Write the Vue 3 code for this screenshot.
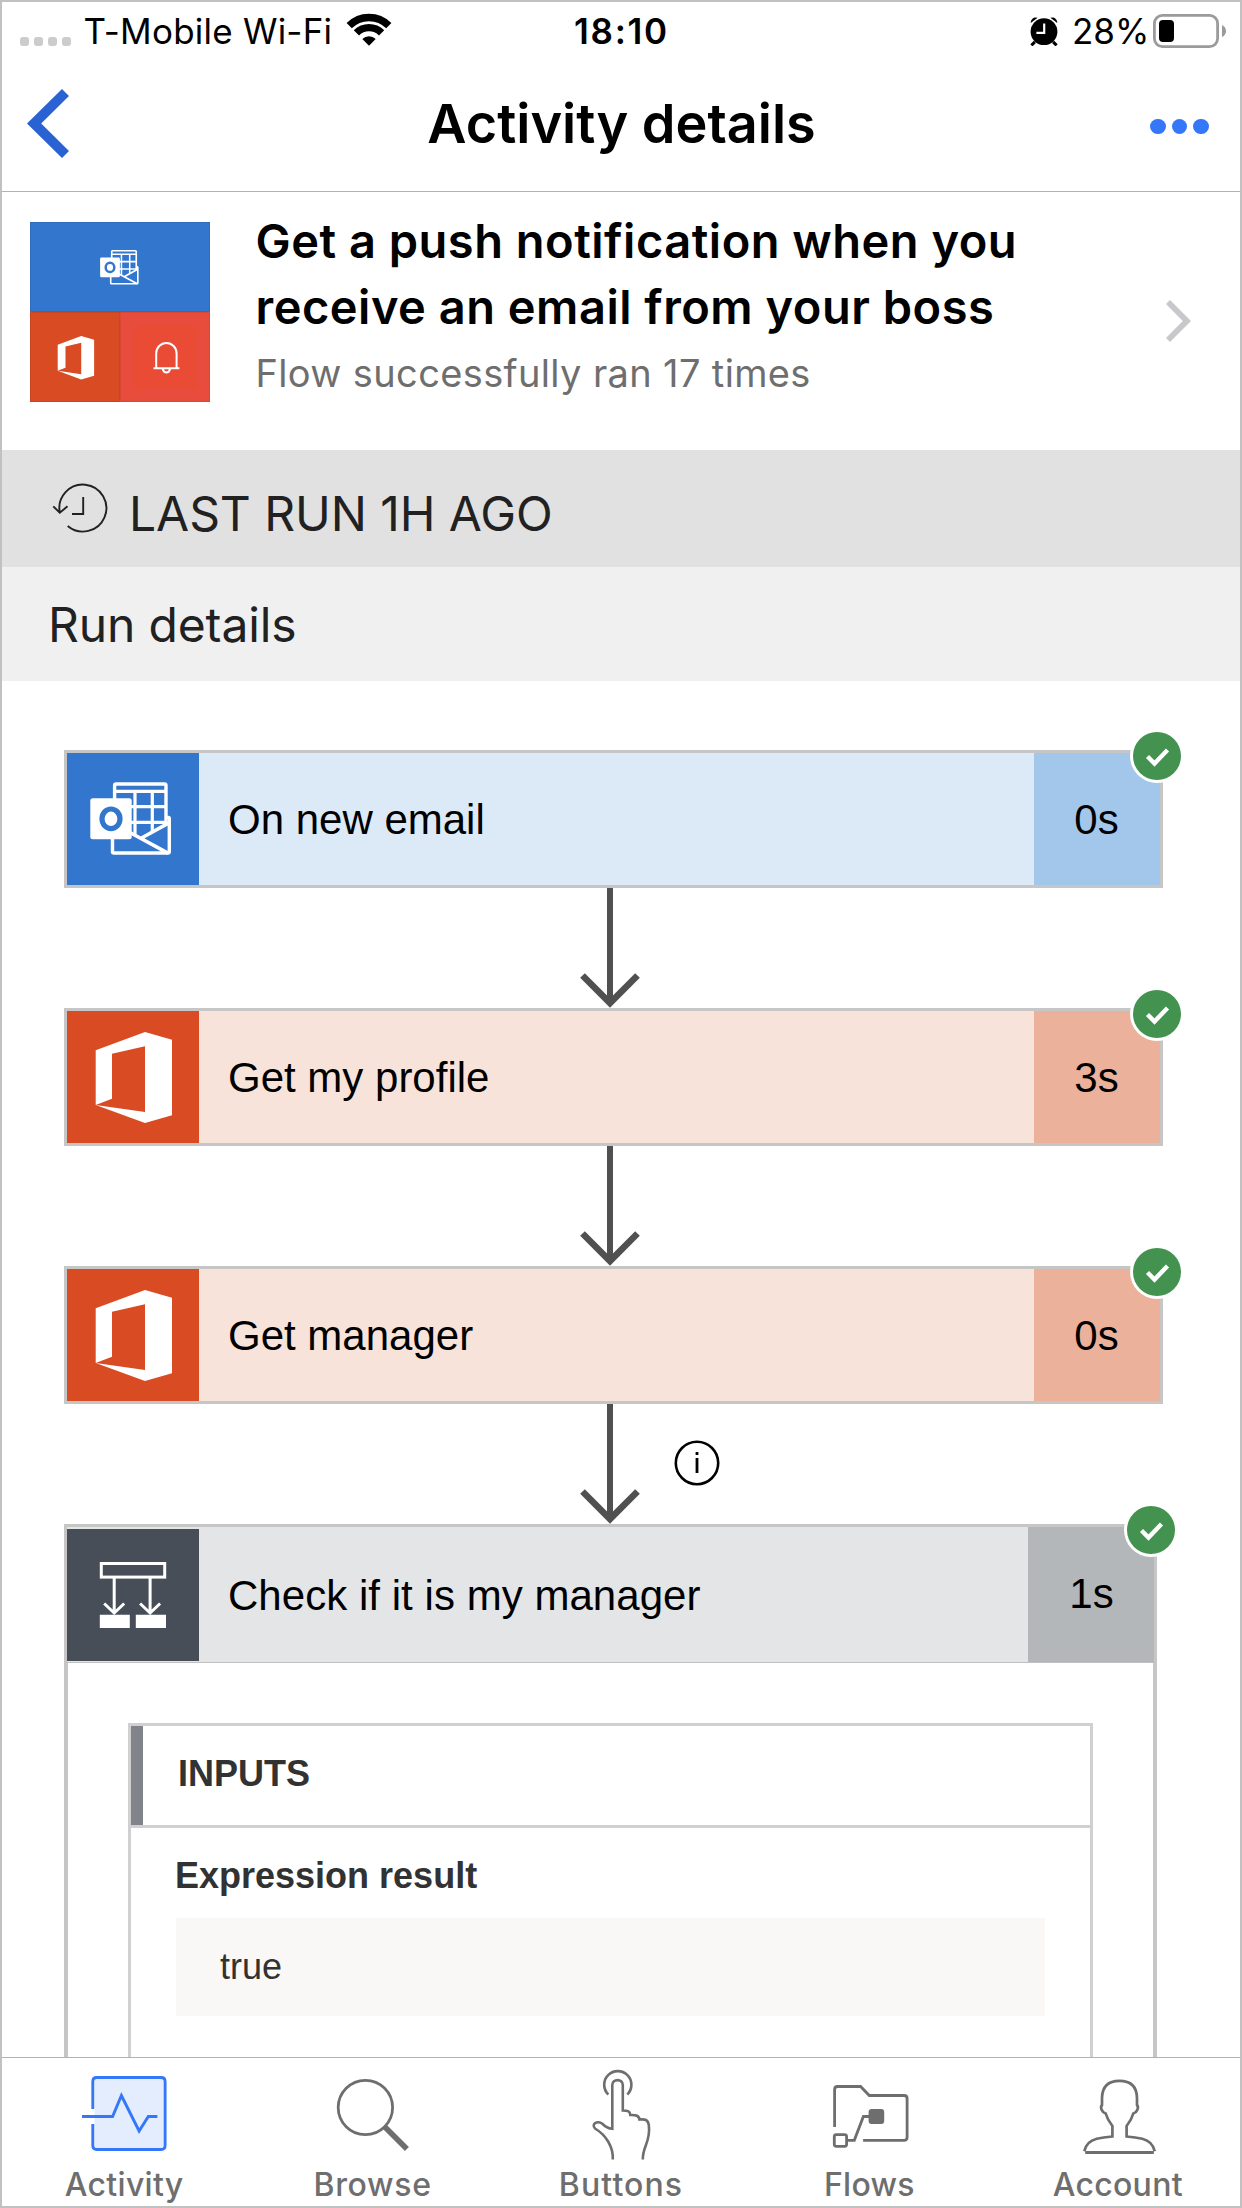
<script setup>
const steps = [
  { title: 'On new email', time: '0s', kind: 'outlook' },
  { title: 'Get my profile', time: '3s', kind: 'office' },
  { title: 'Get manager', time: '0s', kind: 'office', info: true }
]
</script>

<template>
  <div class="screen">
    <!-- reusable glyphs -->
    <svg class="defs" width="0" height="0" aria-hidden="true">
      <symbol id="g-outlook" viewBox="0 0 132 132">
        <rect x="47.6" y="31" width="51.4" height="66" rx="1.5" fill="none" stroke="#fff" stroke-width="3.4" />
        <path d="M48 38.3H99M60 53.7H99M60 69.3H99M68 38V92M85.3 38V92" stroke="#fff" stroke-width="3.2" fill="none" />
        <path d="M45 86V100.5H103V70L74.7 85L64 79Z" fill="#3376cd" />
        <path d="M99 64.5H101.5Q102.3 64.5 102.3 66V98.5Q102.3 100 100.8 100H47Q45.5 100 45.5 98.5V84" fill="none" stroke="#fff" stroke-width="3.4" />
        <path d="M62 79L101 100.2M74.5 85L102 69.8" stroke="#fff" stroke-width="3.6" fill="none" />
        <rect x="23.3" y="45.2" width="41.4" height="41" rx="2.5" fill="#fff" />
        <ellipse cx="44" cy="65.8" rx="9" ry="9.8" fill="none" stroke="#3376cd" stroke-width="5.2" />
      </symbol>
      <symbol id="g-office" viewBox="0 0 132 132">
        <path d="M28.7 94V39.3L78 21L105 28.7V104.3L78 112L28.7 94L78 101V35.3L45 42.7V87.7Z" fill="#fff" />
      </symbol>
      <symbol id="g-check" viewBox="0 0 54 54">
        <circle cx="27" cy="27" r="27" fill="#fff" />
        <circle cx="27" cy="27" r="24" fill="#43924f" />
        <path d="M17.5 27.5L24.5 34.5L37.5 21" fill="none" stroke="#fff" stroke-width="4.4" />
      </symbol>
    </svg>

    <div class="status">
      <div class="status-left">
        <div class="signal"><i></i><i></i><i></i><i></i></div>
        <span class="carrier">T-Mobile Wi-Fi</span>
        <svg class="wifi" width="46" height="34" viewBox="346 12 46 34">
          <path d="M349.2 25.7A28 28 0 0 1 388.8 25.7M356.4 32.9A17.8 17.8 0 0 1 381.6 32.9" fill="none" stroke="#000" stroke-width="7.4" />
          <path d="M369 45.7L362.3 39A9.5 9.5 0 0 1 375.7 39Z" />
        </svg>
      </div>
      <span class="clock">18:10</span>
      <div class="status-right">
        <svg width="28" height="30" viewBox="1029.6 15.6 28 30">
          <circle cx="1043.6" cy="31.3" r="13.4" />
          <path d="M1034.5 41.5L1031 45M1052.7 41.5L1056.2 45" stroke="#000" stroke-width="3" />
          <path d="M1030.4 22.5A5 5 0 0 1 1037.2 17.4ZM1056.8 22.5A5 5 0 0 0 1050 17.4Z" />
          <path d="M1043.8 23V32.4H1036" fill="none" stroke="#fff" stroke-width="2.2" />
        </svg>
        <span class="percent">28%</span>
        <svg width="74" height="34" viewBox="1153 13 74 34">
          <rect x="1154.4" y="14.4" width="63.2" height="31.2" rx="8" fill="none" stroke="#9b9b9b" stroke-width="2.8" />
          <rect x="1159" y="19" width="15" height="22" rx="4" />
          <path d="M1222 24Q1226 26 1226 30T1222 36Z" fill="#9b9b9b" />
        </svg>
      </div>
    </div>

    <header class="nav">
      <svg class="back" width="42" height="69" viewBox="0 0 42 69">
        <path d="M35 0L42 7L14.2 34.5L42 62L35 69L0 34.5Z" fill="#2a62d3" />
      </svg>
      <h1>Activity details</h1>
      <div class="more"><i></i><i></i><i></i></div>
    </header>

    <section class="flow-card">
      <div class="thumb">
        <div class="tile tile-blue"><svg width="63" height="63"><use href="#g-outlook" /></svg></div>
        <div class="tile tile-orange"><svg width="63" height="63"><use href="#g-office" /></svg></div>
        <div class="tile tile-red">
          <svg class="bell" width="63" height="63" viewBox="0 0 63 63">
            <path d="M22.2 41.5V27.5A10.2 10.6 0 0 1 42.6 27.5V41.5M19.5 42.2H45.4M28.8 43Q29.5 46.4 32.4 46.4T36 43" fill="none" stroke="#fff" stroke-width="2" />
          </svg>
        </div>
      </div>
      <div class="flow-text">
        <h2>Get a push notification when you<br>receive an email from your boss</h2>
        <p>Flow successfully ran 17 times</p>
      </div>
      <svg class="chevron" width="25" height="42" viewBox="0 0 25 42">
        <path d="M4 0L25 21L4 42L0 38L16.8 21L0 4Z" fill="#c7c7cc" />
      </svg>
    </section>

    <div class="last-run">
      <svg width="60" height="60" viewBox="50 480 60 60">
        <path d="M67.7 526A23.5 23.5 0 1 0 59.8 512.5M53.3 506.3L59.8 512.8L67.5 506.3M83.2 497V514H72" fill="none" stroke="#212121" stroke-width="1.9" />
      </svg>
      <span>LAST RUN 1H AGO</span>
    </div>
    <div class="run-details">Run details</div>

    <main class="flow">
      <template v-for="step in steps" :key="step.title">
        <div class="step" :class="step.kind">
          <div class="step-icon"><svg width="132" height="132"><use :href="'#g-' + step.kind" /></svg></div>
          <div class="step-title">{{ step.title }}</div>
          <div class="step-time">{{ step.time }}</div>
          <svg class="check" width="54" height="54"><use href="#g-check" /></svg>
        </div>
        <div class="connector">
          <svg width="60" height="120" viewBox="0 0 60 120">
            <path d="M30 0V114" stroke="#505050" stroke-width="6" />
            <path d="M2.5 87.5L30 115L57.5 87.5" fill="none" stroke="#505050" stroke-width="6.6" />
          </svg>
          <svg v-if="step.info" class="info" width="46" height="46" viewBox="0 0 46 46">
            <circle cx="23" cy="23" r="21.2" fill="none" stroke="#000" stroke-width="2.6" />
            <path d="M23 12V15M23 18V33" stroke="#000" stroke-width="2.8" />
          </svg>
        </div>
      </template>

      <div class="scope">
        <div class="scope-head">
          <div class="step-icon">
            <svg width="132" height="132" viewBox="0 0 132 132">
              <rect x="34.3" y="34.5" width="63.4" height="13.6" fill="none" stroke="#fff" stroke-width="3" />
              <path d="M47.2 49V83M83.1 49V83M37.2 74.5L47.2 84L57.2 74.5M73.1 74.5L83.1 84L93.1 74.5" fill="none" stroke="#fff" stroke-width="3" />
              <path d="M32.8 85.7H62.8V99H32.8ZM68.8 85.7H99V99H68.8Z" fill="#fff" />
            </svg>
          </div>
          <div class="step-title">Check if it is my manager</div>
          <div class="step-time">1s</div>
          <svg class="check" width="54" height="54"><use href="#g-check" /></svg>
        </div>
        <div class="scope-body">
          <div class="inputs">
            <div class="inputs-head"><span>INPUTS</span></div>
            <div class="inputs-label">Expression result</div>
            <div class="inputs-value">true</div>
          </div>
        </div>
      </div>
    </main>

    <nav class="tabs">
      <div class="tab">
        <svg width="100" height="104" viewBox="74.2 2062 100 104">
          <path d="M95 2079H163.5V2148H95V2124.5H93V2109H95Z" fill="#e4edfd" />
          <path d="M93 2109V2081.5Q93 2077.5 97 2077.5H161.3Q165.3 2077.5 165.3 2081.5V2145.5Q165.3 2149.5 161.3 2149.5H97Q93 2149.5 93 2145.5V2124" fill="none" stroke="#3478f9" stroke-width="2.9" />
          <rect x="90" y="2109" width="4.6" height="15" fill="#fff" />
          <path d="M82.2 2116.5H112.8L121.6 2095.5L139.3 2131L148.5 2116.5H157.6" fill="none" stroke="#3478f9" stroke-width="2.9" />
        </svg>
        <span>Activity</span>
      </div>
      <div class="tab tab-wide">
        <svg width="100" height="104" viewBox="322.6 2062 100 104">
          <circle cx="365" cy="2107.5" r="27.2" fill="none" stroke="#6e6e6e" stroke-width="2.8" />
          <path d="M384.5 2127L406.5 2149" stroke="#6e6e6e" stroke-width="5.6" />
        </svg>
        <span>Browse</span>
      </div>
      <div class="tab tab-wider">
        <svg width="100" height="104" viewBox="571 2062 100 104">
          <g fill="none" stroke="#6e6e6e" stroke-width="2.6">
            <path d="M608.3 2094.5A13.6 13.6 0 1 1 627.3 2094.5" />
            <path d="M612.8 2159.5C613.5 2147 606 2135 595 2128.5C591 2124 597 2120.5 602 2123.5C606 2127.500 608.5 2128.5 612.3 2128.8V2085C612.3 2078.5 622.8 2078.5 622.8 2085V2110.5C627 2110.5 630 2110.8 630.3 2115C635 2114.8 639 2115 639.5 2119.5C645 2119 648 2119.5 648.8 2125C651 2142 642.5 2146 642.8 2159.5" />
          </g>
        </svg>
        <span>Buttons</span>
      </div>
      <div class="tab">
        <svg width="100" height="104" viewBox="819.4 2062 100 104">
          <g fill="none" stroke="#6e6e6e" stroke-width="2.8">
            <path d="M835 2127V2089.5Q835 2086.5 838 2086.5H861L869.7 2095.5H904.5Q907.5 2095.5 907.5 2098.5V2137.3Q907.5 2140.3 904.5 2140.3H863.5" />
            <rect x="834.7" y="2134.7" width="12.3" height="11.6" rx="2" />
            <path d="M848 2140.3H854.7L863.8 2116.5H870" />
          </g>
          <rect x="869" y="2109" width="15.6" height="15" rx="3" fill="#6e6e6e" />
        </svg>
        <span>Flows</span>
      </div>
      <div class="tab">
        <svg width="100" height="104" viewBox="1067.8 2062 100 104">
          <path d="M1084.1 2151.2C1085.5 2144.5 1090 2140.5 1096.5 2138.8C1101 2137.8 1107 2137 1112.2 2136.5V2126C1109 2122 1107 2119 1105.5 2113.5C1102 2112.5 1099.5 2107.5 1101.8 2105V2098C1102 2086 1109 2080.8 1119.3 2080.8S1136.6 2086 1136.8 2098V2105C1139.1 2107.5 1136.6 2112.5 1133.1 2113.5C1131.6 2119 1129.6 2122 1126.4 2126V2136.5C1131.6 2137 1137.6 2137.8 1142.1 2138.8C1148.6 2140.5 1153.1 2144.5 1154.5 2151.2" fill="none" stroke="#6e6e6e" stroke-width="2.7" />
          <path d="M1085 2152.5H1153.6" stroke="#6e6e6e" stroke-width="3" />
        </svg>
        <span>Account</span>
      </div>
    </nav>
  </div>
</template>

<style>
body { background: #fff; }
</style>

<style scoped>
* { box-sizing: border-box; }
.screen {
  position: relative;
  width: 1242px;
  height: 2208px;
  display: flex;
  flex-direction: column;
  overflow: hidden;
  background: #fff;
  color: #000;
  font-family: Inter, "Liberation Sans", sans-serif;
}
.screen::after {
  content: "";
  position: absolute;
  inset: 0;
  border: 2px solid #c1c1c1;
  pointer-events: none;
}
.defs { position: absolute; }
svg { display: block; flex: none; }
h1, h2, p { margin: 0; }

.status {
  height: 62px;
  flex: none;
  display: grid;
  grid-template-columns: 1fr auto 1fr;
  align-items: center;
  padding: 0 15px 0 20px;
  font-size: 35px;
  line-height: 42px;
}
.status-left, .status-right { display: flex; align-items: center; }
.status-right { justify-content: flex-end; }
.signal { display: flex; gap: 5px; margin: 21px 12.5px 0 0; }
.signal i { width: 9px; height: 9px; border-radius: 3px; background: #ccc; }
.carrier { width: 262.5px; letter-spacing: 0.23px; white-space: nowrap; }
.wifi { margin-top: -4px; }
.clock { font-weight: 600; letter-spacing: 1.7px; padding-right: 4px; }
.percent { width: 81px; margin-left: 14px; }

.nav {
  height: 130px;
  flex: none;
  display: grid;
  grid-template-columns: 1fr auto 1fr;
  align-items: center;
  padding: 0 33px 6px 27px;
  border-bottom: 1px solid #b2b2b2;
}
.nav h1 { font-size: 54px; font-weight: 600; line-height: 66px; margin-left: 7px; }
.more { display: flex; gap: 6px; justify-self: end; margin-top: 6px; }
.more i { width: 15.6px; height: 15.6px; border-radius: 50%; background: #3478f9; }

.flow-card { height: 258px; flex: none; display: flex; padding: 16px 0 0 30px; }
.thumb {
  width: 180px;
  height: 180px;
  margin-top: 14px;
  display: grid;
  grid-template: 90px 90px / 90px 90px;
}
.tile { display: flex; align-items: center; justify-content: center; }
.tile-blue { grid-column: span 2; background: #3376cd; box-shadow: inset 0 0 0 1px #2f6cbd; }
.tile-orange { background: #d94b22; box-shadow: inset 0 0 0 1px #c9471f; }
.tile-red { background: #e84c3d; box-shadow: inset 0 0 0 1px #d94837; }
.bell { background: #ea4b35; }
.flow-text { width: 911px; padding-left: 45.5px; }
.flow-text h2 { font-size: 47px; font-weight: 600; line-height: 66px; letter-spacing: 0.5px; }
.flow-text p { font-size: 38px; line-height: 66px; letter-spacing: 0.36px; color: #6e6e6e; }
.chevron { margin: 92px 0 0 45px; }

.last-run {
  height: 117px;
  flex: none;
  display: flex;
  padding-left: 50px;
  background: #e1e1e1;
  color: #212121;
  font-size: 48px;
  line-height: 128px;
  letter-spacing: -0.06px;
}
.last-run svg { margin: 30px 19px 0 0; }
.run-details {
  height: 114px;
  flex: none;
  padding-left: 48px;
  background: #f0f0f0;
  color: #212121;
  font-size: 48px;
  line-height: 115px;
  letter-spacing: -0.15px;
}

.flow {
  height: 1376px;
  flex: none;
  overflow: hidden;
  padding: 69px 0 0 64px;
  font-family: "Liberation Sans", Arial, sans-serif;
}
.step {
  position: relative;
  width: 1099px;
  height: 138px;
  display: flex;
  border: 3px solid #c6c6c6;
  font-size: 42px;
  line-height: 134px;
}
.step-icon { width: 132px; height: 132px; }
.step-title { flex: 1; height: 100%; padding-left: 29px; }
.step-time { width: 126px; height: 100%; padding-right: 1px; text-align: center; }
.outlook .step-icon { background: #3376cd; }
.outlook .step-title { background: #dce9f7; }
.outlook .step-time { background: #a3c6eb; }
.office .step-icon { background: #d94b22; }
.office .step-title { background: #f7e3da; }
.office .step-time { background: #ebb19b; }
.check { position: absolute; top: -24px; right: -24px; }
.connector { height: 120px; display: flex; padding-left: 516px; }
.info { margin: 35.5px 0 0 34px; }

.scope { width: 1093px; }
.scope-head {
  position: relative;
  height: 139px;
  display: flex;
  border: 3px solid #c6c6c6;
  border-bottom: 1px solid #c0c0c3;
  background: #e4e5e7;
  font-size: 42px;
  line-height: 137px;
}
.scope-head .step-icon { margin-top: 2px; background: #484e58; }
.scope-head .step-title { letter-spacing: 0.04px; }
.scope-head .step-time { padding: 0 0 0 1px; background: #b3b7ba; line-height: 133px; }
.scope-body {
  height: 500px;
  padding: 60px 60px 0;
  border: solid #c6c6c6;
  border-width: 0 4px;
}
.inputs {
  height: 440px;
  border: 3px solid #d0d0d0;
  font-size: 36px;
  color: #323232;
}
.inputs-head {
  height: 102px;
  display: flex;
  border-bottom: 3px solid #d0d0d0;
  font-weight: 700;
  line-height: 95px;
}
.inputs-head::before { content: ""; width: 12px; margin-right: 35px; background: #808389; }
.inputs-label { height: 90px; padding-left: 44px; font-weight: 700; line-height: 95px; }
.inputs-value {
  width: 869px;
  height: 98px;
  margin-left: 45px;
  padding-left: 44px;
  background: #faf7f7;
  line-height: 97px;
}

.tabs {
  height: 151px;
  flex: none;
  display: flex;
  border-top: 1px solid #b2b2b2;
  background: #fff;
  padding-top: 4px;
}
.tab {
  flex: 1;
  display: flex;
  flex-direction: column;
  align-items: center;
  color: #6e6e6e;
  font-size: 32px;
  font-weight: 500;
  line-height: 38px;
  letter-spacing: 0.3px;
}
.tab-wide { letter-spacing: 0.7px; }
.tab-wider { letter-spacing: 1.1px; }
</style>
